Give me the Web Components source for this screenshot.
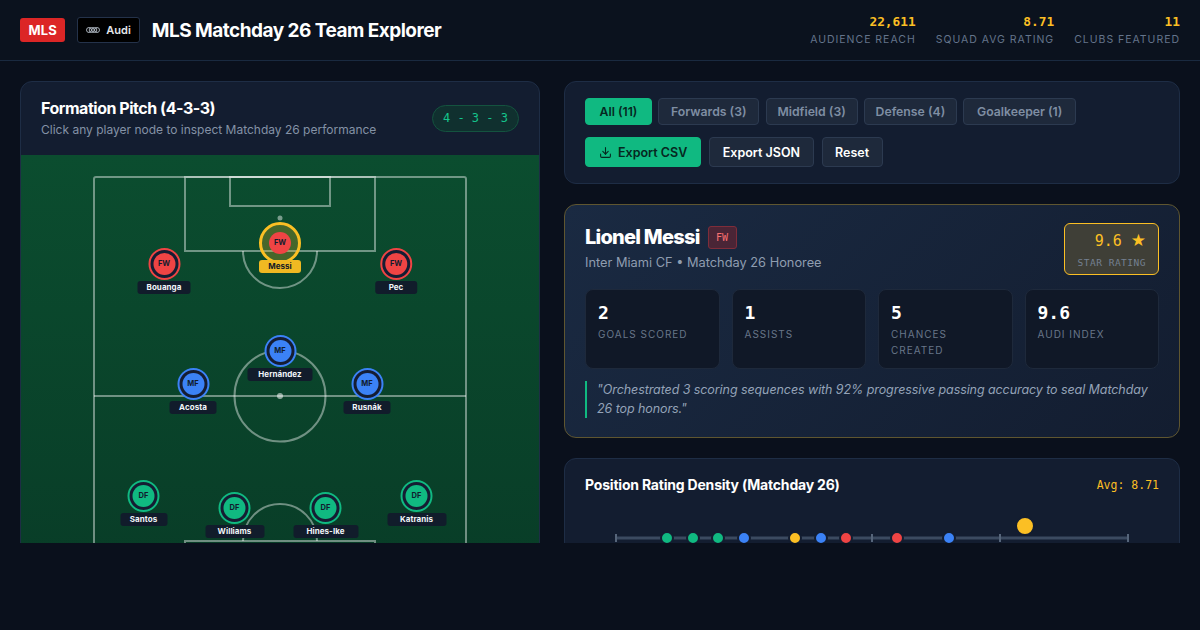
<!DOCTYPE html>
<html lang="en">
<head>
<meta charset="utf-8">
<title>MLS Matchday 26 Team Explorer</title>
<style>
  html, body { margin: 0; height: 630px; overflow: hidden; background: #0a101c; }
  body { font-family: Inter, "Liberation Sans", sans-serif; color: #fff; }
</style>
</head>
<body>
<app-shell></app-shell>

<script>
const MONO = '"DejaVu Sans Mono", monospace';

class HeaderStat extends HTMLElement {
  connectedCallback() {
    this.attachShadow({ mode: "open" });
    this.shadowRoot.innerHTML = `
      <style>
        :host { display: flex; flex-direction: column; align-items: flex-end; gap: 3px; }
        .value { font: 700 12.8px/16px ${MONO}; color: #fbbf24; }
        .label { font: 400 10.5px/14px Inter, sans-serif; letter-spacing: 0.98px; color: #64748b; text-transform: uppercase; }
      </style>
      <div class="value">${this.getAttribute("value")}</div>
      <div class="label">${this.getAttribute("label")}</div>`;
  }
}
customElements.define("header-stat", HeaderStat);

class AppHeader extends HTMLElement {
  connectedCallback() {
    this.attachShadow({ mode: "open" });
    this.shadowRoot.innerHTML = `
      <style>
        :host { display: flex; align-items: center; height: 60px; padding: 0 20px; box-sizing: content-box;
          border-bottom: 1px solid #1a2a40; background: #0b121e; }
        .mls { background: #dc2626; color: #fff; font: 700 13px/24px Inter, sans-serif; padding: 0 8.5px; border-radius: 3px; letter-spacing: 0.1px; }
        .audi { display: flex; align-items: center; gap: 6px; height: 24px; margin-left: 12px; padding: 0 8px; background: #000;
          border: 1px solid #24324a; border-radius: 3px; font: 600 11px Inter, sans-serif; color: #e5e7eb; }
        h1 { margin: 0 0 0 12px; font: 700 19px/1 Inter, sans-serif; letter-spacing: -0.52px; color: #fff; }
        .stats { margin-left: auto; display: flex; gap: 20px; }
      </style>
      <span class="mls">MLS</span>
      <span class="audi">
        <svg width="14" height="6" viewBox="0 0 14 6" fill="none" stroke="#cbd5e1" stroke-width="0.8">
          <circle cx="3" cy="3" r="2.5"/><circle cx="5.7" cy="3" r="2.5"/><circle cx="8.3" cy="3" r="2.5"/><circle cx="11" cy="3" r="2.5"/>
        </svg>Audi</span>
      <h1>MLS Matchday 26 Team Explorer</h1>
      <div class="stats">
        <header-stat value="22,611" label="Audience Reach"></header-stat>
        <header-stat value="8.71" label="Squad Avg Rating"></header-stat>
        <header-stat value="11" label="Clubs Featured"></header-stat>
      </div>`;
  }
}
customElements.define("app-header", AppHeader);

class PitchPlayer extends HTMLElement {
  connectedCallback() {
    const pos = this.getAttribute("pos");
    const name = this.getAttribute("name");
    const colour = { FW: "#ef4444", MF: "#3b82f6", DF: "#10b981" }[pos];
    const labelWidth = Math.max(41.5, name.length * 6 + 11);
    this.attachShadow({ mode: "open" });
    this.shadowRoot.innerHTML = `
      <style>
        :host { position: absolute; display: flex; flex-direction: column; align-items: center; transform: translateX(-50%); }
        .ring { box-sizing: border-box; width: 32px; height: 32px; border-radius: 50%; border: 2px solid ${colour};
          background: #151d33; display: flex; align-items: center; justify-content: center; }
        .disc { width: 22px; height: 22px; border-radius: 50%; background: ${colour}; color: #111c2e;
          font: 700 7.5px/22px Inter, sans-serif; text-align: center; }
        .name { box-sizing: border-box; height: 13.5px; width: ${labelWidth}px; margin-top: 0.5px; border-radius: 3px; background: #111c2b;
          color: #f1f5f9; font: 700 8px/13.5px Inter, sans-serif; letter-spacing: 0.05px; text-align: center; }
        :host([star]) .ring { width: 42px; height: 42px; border: 3px solid #fbbf24; background: rgba(251,191,36,0.25); }
        :host([star]) .name { background: #f0b922; color: #111827; margin-top: -4.5px; position: relative; }
      </style>
      <div class="ring"><div class="disc">${pos}</div></div>
      <div class="name">${name}</div>`;
  }
}
customElements.define("pitch-player", PitchPlayer);

class FormationPitch extends HTMLElement {
  connectedCallback() {
    const line = 'stroke="rgba(255,255,255,0.42)" stroke-width="2" fill="none"';
    this.attachShadow({ mode: "open" });
    this.shadowRoot.innerHTML = `
      <style>
        :host { display: block; position: relative; height: 482px; background: linear-gradient(180deg, #0b4d2f 0%, #083a26 100%); }
        svg { position: absolute; left: 0; top: 0; }
      </style>
      <svg width="518" height="482" viewBox="0 0 518 482">
        <rect x="73" y="22" width="372" height="438" rx="2" ${line}/>
        <line x1="73" y1="241" x2="445" y2="241" ${line}/>
        <circle cx="259" cy="241" r="45.5" ${line}/>
        <circle cx="259" cy="241" r="3" fill="rgba(255,255,255,0.55)"/>
        <rect x="164" y="22" width="190" height="74" ${line}/>
        <rect x="209" y="22" width="100" height="29" ${line}/>
        <circle cx="259" cy="63" r="2.5" fill="rgba(255,255,255,0.45)"/>
        <path d="M222 96 A37 37 0 0 0 296 96" ${line}/>
        <rect x="164" y="386" width="190" height="74" ${line}/>
        <path d="M222 386 A37 37 0 0 1 296 386" ${line}/>
      </svg>
      <pitch-player pos="FW" name="Bouanga" style="left:143px;top:93px"></pitch-player>
      <pitch-player pos="FW" name="Messi" star style="left:259px;top:67px"></pitch-player>
      <pitch-player pos="FW" name="Pec" style="left:375px;top:93px"></pitch-player>
      <pitch-player pos="MF" name="Hernández" style="left:259px;top:180px"></pitch-player>
      <pitch-player pos="MF" name="Acosta" style="left:172px;top:213px"></pitch-player>
      <pitch-player pos="MF" name="Rusnák" style="left:346px;top:213px"></pitch-player>
      <pitch-player pos="DF" name="Santos" style="left:122.5px;top:325px"></pitch-player>
      <pitch-player pos="DF" name="Williams" style="left:213.5px;top:337px"></pitch-player>
      <pitch-player pos="DF" name="Hines-Ike" style="left:304.5px;top:337px"></pitch-player>
      <pitch-player pos="DF" name="Katranis" style="left:395.5px;top:325px"></pitch-player>`;
  }
}
customElements.define("formation-pitch", FormationPitch);

class PitchCard extends HTMLElement {
  connectedCallback() {
    this.attachShadow({ mode: "open" });
    this.shadowRoot.innerHTML = `
      <style>
        :host { display: block; box-sizing: border-box; height: 600px; background: #131d30; border: 1px solid #1e2d45; border-radius: 12px; overflow: hidden; }
        header { display: flex; align-items: center; justify-content: space-between; height: 73px; padding: 0 20px; }
        .text { margin-top: -2px; }
        h2 { margin: 0; font: 700 16px/20px Inter, sans-serif; letter-spacing: -0.47px; color: #fff; }
        p { margin: 4px 0 0; font: 400 12px/16px Inter, sans-serif; color: #8492a6; }
        .pill { font: 400 12px/25px ${MONO}; padding: 0 10px; border: 1px solid #14533f; border-radius: 14px; background: #10302f; color: #14c48c; }
      </style>
      <header>
        <div class="text">
          <h2>Formation Pitch (4-3-3)</h2>
          <p>Click any player node to inspect Matchday 26 performance</p>
        </div>
        <span class="pill">4 - 3 - 3</span>
      </header>
      <formation-pitch></formation-pitch>`;
  }
}
customElements.define("pitch-card", PitchCard);

class ToolBar extends HTMLElement {
  connectedCallback() {
    const tabs = [["Forwards (3)", 101], ["Midfield (3)", 92], ["Defense (4)", 93], ["Goalkeeper (1)", 113]];
    this.attachShadow({ mode: "open" });
    this.shadowRoot.innerHTML = `
      <style>
        :host { display: flex; flex-direction: column; gap: 12px; padding: 16px 20px; background: #131d30; border: 1px solid #1e2d45; border-radius: 12px; }
        .row { display: flex; }
        .tabs { gap: 6.3px; }
        .actions { gap: 8px; }
        button { box-sizing: border-box; margin: 0; padding: 0; font-family: Inter, sans-serif; font-weight: 600; border-radius: 4px; border: 1px solid #2c3a50; }
        .tab { height: 27px; font-size: 12.25px; background: #1e293b; color: #7f8ea3; }
        .act { height: 30px; padding: 0 12.5px; font-size: 12.5px; background: #1e293b; color: #fff; }
        .on { background: #10b981; border-color: #10b981; color: #06281f; }
        .act.on { display: flex; align-items: center; gap: 6px; padding: 0 13px; }
      </style>
      <div class="row tabs">
        <button class="tab on" style="width:67px">All (11)</button>
        ${tabs.map(([t, w]) => `<button class="tab" style="width:${w}px">${t}</button>`).join("")}
      </div>
      <div class="row actions">
        <button class="act on">
          <svg width="13" height="13" viewBox="0 0 24 24" fill="none" stroke="currentColor" stroke-width="2" stroke-linecap="round" stroke-linejoin="round">
            <path d="M21 15v4a2 2 0 0 1-2 2H5a2 2 0 0 1-2-2v-4"/><polyline points="7 10 12 15 17 10"/><line x1="12" y1="15" x2="12" y2="3"/>
          </svg>Export CSV</button>
        <button class="act">Export JSON</button>
        <button class="act">Reset</button>
      </div>`;
  }
}
customElements.define("tool-bar", ToolBar);

class StatCard extends HTMLElement {
  connectedCallback() {
    this.attachShadow({ mode: "open" });
    this.shadowRoot.innerHTML = `
      <style>
        :host { display: block; box-sizing: border-box; height: 80px; padding: 12px; background: #101827; border: 1px solid #1e293b; border-radius: 8px; }
        .value { font: 700 18px/22px ${MONO}; color: #fff; }
        .label { margin-top: 2px; font: 400 10px/16px Inter, sans-serif; letter-spacing: 1px; color: #687689; text-transform: uppercase; }
      </style>
      <div class="value">${this.getAttribute("value")}</div>
      <div class="label">${this.getAttribute("label")}</div>`;
  }
}
customElements.define("stat-card", StatCard);

class PlayerDetail extends HTMLElement {
  connectedCallback() {
    this.attachShadow({ mode: "open" });
    this.shadowRoot.innerHTML = `
      <style>
        :host { display: block; padding: 18px 20px 19px; background: linear-gradient(135deg, #1a2a42 0%, #131d30 100%); border: 1px solid #5f5630; border-radius: 12px; }
        .top { display: flex; justify-content: space-between; align-items: flex-start; }
        .who { padding-top: 2px; }
        .name { display: flex; align-items: center; gap: 8px; }
        h2 { margin: 0; font: 800 20px/24px Inter, sans-serif; letter-spacing: -0.75px; color: #fff; }
        .pos { box-sizing: border-box; height: 23px; padding: 0 7.5px; font: 400 10px/21px ${MONO}; color: #f87171; background: #4a2536; border: 1px solid #7f2d3a; border-radius: 3px; }
        .club { margin-top: 5px; font: 400 12.8px/18px Inter, sans-serif; color: #8f9db0; }
        .rating { box-sizing: border-box; width: 95px; height: 52px; padding: 5px 12px 0 0; text-align: right; background: #3f3f37; border: 1px solid #fbbf24; border-radius: 6px; }
        .score { font: 400 15px/22px ${MONO}; color: #fbbf24; }
        .score span { font: 400 17px/22px "DejaVu Sans", sans-serif; }
        .cap { margin-top: 4px; font: 400 9.5px/13px ${MONO}; letter-spacing: 0.5px; color: #748091; white-space: nowrap; }
        .stats { display: grid; grid-template-columns: repeat(4, 1fr); gap: 12px; margin-top: 14px; }
        blockquote { margin: 12px 0 0; padding-left: 10px; border-left: 2px solid #10b981; font: italic 400 12.5px/18.5px Inter, sans-serif; letter-spacing: -0.08px; color: #94a3b8; }
      </style>
      <div class="top">
        <div class="who">
          <div class="name"><h2>Lionel Messi</h2><span class="pos">FW</span></div>
          <div class="club">Inter Miami CF • Matchday 26 Honoree</div>
        </div>
        <div class="rating">
          <div class="score">9.6 <span>★</span></div>
          <div class="cap">STAR RATING</div>
        </div>
      </div>
      <div class="stats">
        <stat-card value="2" label="Goals Scored"></stat-card>
        <stat-card value="1" label="Assists"></stat-card>
        <stat-card value="5" label="Chances Created"></stat-card>
        <stat-card value="9.6" label="Audi Index"></stat-card>
      </div>
      <blockquote>"Orchestrated 3 scoring sequences with 92% progressive passing accuracy to seal Matchday 26 top honors."</blockquote>`;
  }
}
customElements.define("player-detail", PlayerDetail);

class DensityCard extends HTMLElement {
  connectedCallback() {
    const dots = [
      [667, "#10b981"], [693, "#10b981"], [718, "#10b981"], [744, "#3b82f6"], [795, "#fbbf24"],
      [821, "#3b82f6"], [846, "#ef4444"], [897, "#ef4444"], [949, "#3b82f6"],
    ];
    const left = 564 + 1;
    const ticks = [616, 744, 872, 1000, 1128];
    this.attachShadow({ mode: "open" });
    this.shadowRoot.innerHTML = `
      <style>
        :host { display: block; height: 300px; padding: 16px 20px; background: #131d30; border: 1px solid #1e2d45; border-radius: 12px; }
        .head { display: flex; justify-content: space-between; align-items: center; }
        h3 { margin: 0; font: 700 14px/20px Inter, sans-serif; letter-spacing: -0.2px; color: #fff; }
        .avg { font: 400 11.5px/20px ${MONO}; color: #fbbf24; }
        svg { display: block; margin: 7px 0 0 -20px; }
      </style>
      <div class="head"><h3>Position Rating Density (Matchday 26)</h3><span class="avg">Avg: 8.71</span></div>
      <svg width="614" height="60" viewBox="${left} 502 614 60">
        <line x1="616" y1="538" x2="1128" y2="538" stroke="#3b4a60" stroke-width="3"/>
        ${ticks.map((x) => `<line x1="${x}" y1="534" x2="${x}" y2="542" stroke="#56657a" stroke-width="2"/>`).join("")}
        ${dots.map(([x, c]) => `<circle cx="${x}" cy="538" r="6" fill="${c}" stroke="#131d30" stroke-width="2"/>`).join("")}
        <circle cx="1025" cy="526" r="9" fill="#fbbf24" stroke="#131d30" stroke-width="2"/>
      </svg>`;
  }
}
customElements.define("density-card", DensityCard);

class AppShell extends HTMLElement {
  connectedCallback() {
    this.attachShadow({ mode: "open" });
    this.shadowRoot.innerHTML = `
      <style>
        :host { display: block; }
        main { display: grid; grid-template-columns: 520px 616px; gap: 24px; height: 462px; padding: 20px 20px 0; overflow: hidden; }
        .side { display: flex; flex-direction: column; gap: 20px; }
      </style>
      <app-header></app-header>
      <main>
        <pitch-card></pitch-card>
        <div class="side">
          <tool-bar></tool-bar>
          <player-detail></player-detail>
          <density-card></density-card>
        </div>
      </main>`;
  }
}
customElements.define("app-shell", AppShell);
</script>
</body>
</html>
